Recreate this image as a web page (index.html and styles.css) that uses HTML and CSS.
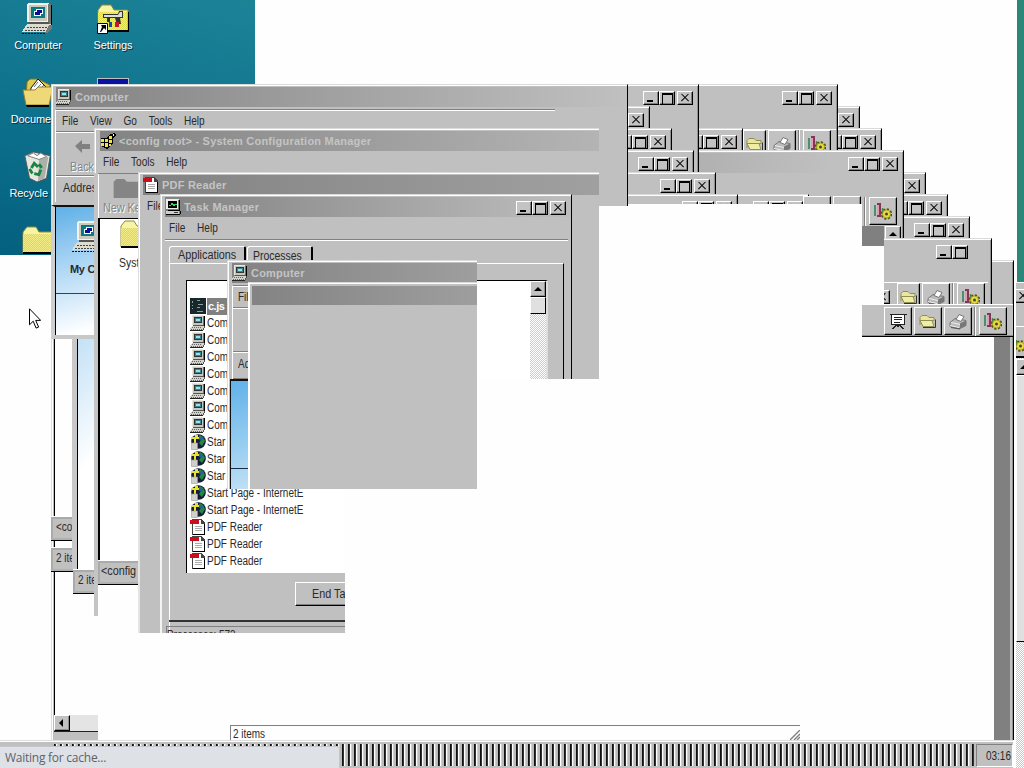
FILE: index.html
```html
<!DOCTYPE html>
<html lang="en">
<head>
<meta charset="utf-8">
<title>Desktop</title>
<link rel="stylesheet" href="styles.css">
</head>
<body>
<svg class="defs" aria-hidden="true">
  <symbol id="pc" viewBox="0 0 16 16" shape-rendering="crispEdges">
    <path fill="#e8e8de" d="M2 0h11v10H2z"/><path fill="#c6c8bd" d="M3 1h10v9H3z"/><path fill="#6d6d68" d="M13 1h1v9h-1z"/><path d="M14 1h1v10h-1z"/><path fill="#333" d="M4 2h8v6H4z"/><path fill="#2f8b9c" d="M5 3h6v4H5z"/><path fill="#9fe0e6" d="M6 4h4v2H6z"/>
    <path fill="#d2d2ca" d="M2 11h12v2l-1 2H0v-2h1z"/><path fill="#555" d="M3 10h11v1H3zM14 11h1v2h-1zM13 13h1v2h-1z"/><path fill="#222" d="M0 15h13v1H0z"/><path stroke="#666" stroke-dasharray="1 1" d="M2 12.5h10M1 14.5h11"/>
  </symbol>
  <symbol id="bigpc" viewBox="0 0 32 32" shape-rendering="crispEdges">
    <path fill="#f4f2e7" d="M6 0h20l2 2v17H5V2z"/><path fill="#cbc9bd" d="M7 2h18v16H7z"/><path fill="#74746c" d="M26 1h3v20h-3z"/><path d="M29 2h1v20h-1z"/><path fill="#555" d="M9 4h14v11H9z"/><path fill="#087b83" d="M10 5h13v10H10z"/><path fill="#fff" d="M14 6h7v5h-7zM12 8h7v5h-7z"/><path fill="#0e0b91" d="M15 7h5v3h-5zM13 9h5v3h-5z"/>
    <path fill="#555" d="M7 19h20v2H7z"/><path fill="#dedbd0" d="M5 21h24v3l-4 5H0l3-5z"/><path fill="#7a7972" d="M27 22h3v3l-4 5h-3z"/><path stroke="#444" stroke-dasharray="2 1" d="M5 24.5h20M3 27.5h20"/><path stroke="#111" stroke-dasharray="2 1" d="M0 30.5h24"/>
  </symbol>
  <pattern id="yellow" width="2" height="2" patternUnits="userSpaceOnUse"><path fill="#dddb49" d="M0 0h2v2H0z"/><path fill="#f3ec86" d="M0 0h1v1H0zM1 1h1v1H1z"/></pattern>
  <symbol id="folder" viewBox="0 0 32 30">
    <path fill="#f7f4a6" stroke="#8d8c34" d="M1 6l4-5h9l3 5h14v21H1z"/><path fill="url(#yellow)" d="M1 8h29v18H1z"/><path d="M1 26h30V8h1v20H1z"/>
  </symbol>
  <symbol id="settings" viewBox="0 0 32 30">
    <use href="#folder" width="32" height="30"/><path fill="#333" d="M6 10h15l1-3h4v7h-3l1 6h-4l-2-6h-5v4h-3v-4H6z"/><path fill="#ddd" d="M7 11h14l2-3h2v5H7z"/><path fill="#0b4bb6" d="M12 18h3v5h-3z"/><path fill="#c4162d" d="M18 18h4v5h-4z"/>
    <path fill="#fff" stroke="#000" d="M.5 19.5h10v10H.5z"/><path d="M4 21h5v5l-2-2-3 4H3l2-5z"/>
  </symbol>
  <symbol id="docs" viewBox="0 0 32 30">
    <path fill="#dfcd54" stroke="#80731f" d="M5 4l3-3h8l12 6v12H4z"/><path fill="#fff" stroke="#111" d="M9 10L16 1l10 10-3 7H8z"/><path stroke="#678" d="M12 9l4-5m-2 7l5-5m-2 6l5-5"/><path fill="#efd877" stroke="#967e2b" d="M1 12h12l3-3h15l-4 18H4z"/><path d="M4 27h23v2H5z"/>
  </symbol>
  <symbol id="bin" viewBox="0 0 32 34">
    <path fill="#e6e8df" stroke="#555" d="M2 5l9-4 18 4-4 24-10 4-8-4z"/><path fill="#abb0aa" d="M17 9l10-3-4 23-7 3z"/><path fill="#fff" stroke="#777" d="M5 5l6-3 4 3 4-3 6 4-8 3z"/><path fill="none" stroke="#188342" stroke-width="3" d="M9 18l3-5 4 4M19 20l-2 5-5-1M10 24l-3-5M17 14l3 4"/>
  </symbol>
  <symbol id="pdf" viewBox="0 0 16 16" shape-rendering="crispEdges">
    <path fill="#444" d="M2 0h9l4 4v12H2z"/><path fill="#fff" d="M3 1h8v4h3v10H3z"/><path fill="#c7101a" d="M0 1h9v4H0z"/><path stroke="#aaa" d="M5 7.5h7M5 9.5h7M5 11.5h7"/><path d="M14 5h1v11h-1zM3 15h11v1H3z"/>
  </symbol>
  <symbol id="cfg" viewBox="0 0 16 16" shape-rendering="crispEdges">
    <path d="M1 5h6l2-3 5-2 2 2-3 3v5l-4 5-2 1-6-3z"/><path fill="#efe54a" d="M1 6h3v3H1zM5 6h3v3H5zM1 10h3v3H1zM5 10h3v4H5zM9 7h3v3H9zM9 11h2v2H9zM9 3h3v3H9z"/><path fill="#fff" d="M13 1h1v2h-1z"/>
  </symbol>
  <symbol id="task" viewBox="0 0 16 16" shape-rendering="crispEdges">
    <path fill="#eee" d="M1 0h13v10H1z"/><path fill="#777" d="M13 1h1v10H2v-1h11z"/><path d="M14 1h1v11H3v-1h11zM3 2h9v7H3zM1 15h14v1H1zM15 12h1v3h-1z"/><path fill="#d0d0c8" d="M1 12h13v3H1z"/><path fill="#333" d="M9 13h4v1H9z"/><path stroke="#36dc4d" fill="none" d="M4 6h2l1-2 2 3 1-2h2"/>
  </symbol>
  <symbol id="globe" viewBox="0 0 16 16">
    <circle cx="8.500" cy="7.500" r="7.300" fill="#161b37"/><path fill="#1d8c3b" d="M10 1l3 2 2 4-3 5-3-3 2-3-3-2z"/><path fill="#245bac" d="M10 3l3 1-1 3-3-1z"/><path fill="#e7e331" d="M1 3h8v2H6v5H4V5H1zM5 1h3v2H5z"/><path fill="#d0d0ca" stroke="#999" stroke-width=".6" d="M1.500 9h6v6.500h-6z"/>
  </symbol>
  <symbol id="code" viewBox="0 0 14 14" shape-rendering="crispEdges">
    <path fill="#17282d" d="M0 0h14v14H0z"/><path stroke="#8d9da0" d="M2 3.500h1M2 6.500h1M2 9.500h1M6 2.500h3M7 5.500h4M6 8.500h3M6 11.500h5"/>
  </symbol>
  <symbol id="openf" viewBox="0 0 18 14">
    <path fill="#eae69e" stroke="#8e8e55" d="M1 10V3l2-2h5l2 2h5v3H5z"/><path fill="#f0eda4" stroke="#8e8e55" d="M1 6h12l2 6H4z"/><path stroke="#333" fill="none" d="M4 13h12.500V5"/>
  </symbol>
  <symbol id="print" viewBox="0 0 18 16">
    <path fill="#bbb" stroke="#777" d="M1 9l5-4 11 2v5l-6 3-10-2z"/><path fill="#fff" stroke="#777" d="M7 6l3-5 5 2-3 5z"/><path fill="#777" d="M11 10l6-3v5l-6 3z"/><path stroke="#eee" d="M2 9l9 2M1 12l9 2"/><path stroke="#555" d="M2 14l9 1.500"/>
  </symbol>
  <symbol id="gear" viewBox="0 0 18 17">
    <path fill="#4a906b" d="M0 2h2v11H0z"/><path fill="#80375c" d="M3 0h4v14H3z"/><path fill="#e29bb1" d="M3 2h2v10H3z"/><path stroke="#484" stroke-width="1.500" d="M8.500 5v9"/>
    <circle cx="12.500" cy="11" r="4.500" fill="#e6dc40" stroke="#55520c" stroke-width="2.500" stroke-dasharray="2 1.500"/><circle cx="12.500" cy="11" r="4" fill="#e6dc40" stroke="#8f8a28" stroke-width=".7"/><circle cx="12.500" cy="11" r="1.500" fill="#444"/>
  </symbol>
  <symbol id="board" viewBox="0 0 16 16" shape-rendering="crispEdges">
    <path fill="#fff" stroke="#222" d="M1.500 1.500h13v9h-13z"/><path stroke="#222" fill="none" d="M0 1.500h16M4 4.500h8M4 6.500h8M4 8.500h6M8 11v2M7 11l-4 4M9 11l4 4"/>
  </symbol>
</svg>

<main class="desktop">
  <section class="wallpaper">
    <div class="shortcuts">
      <figure><svg class="i32"><use href="#bigpc"/></svg><figcaption>Computer</figcaption></figure>
      <figure><svg class="i32"><use href="#settings"/></svg><figcaption>Settings</figcaption></figure>
      <figure><svg class="i32"><use href="#docs"/></svg><figcaption>Documents</figcaption></figure>
      <figure><div class="app-tile"></div></figure>
      <figure><svg class="i32"><use href="#bin"/></svg><figcaption>Recycle Bin</figcaption></figure>
      <figure></figure>
      <figure><svg class="i32"><use href="#folder"/></svg></figure>
    </div>
  </section>
  <div class="wallpaper-edge"></div>

  <div class="rail rail-a"></div>
  <div class="hscroll"><span class="sb left"></span></div>
  <div class="status st1"><span class="n">&lt;co</span></div>
  <div class="status st2"><span class="n">2 ite</span></div>
  <div class="sky sky-b"></div>
  <div class="status st3"><span class="n">2 ite</span></div>

  <!-- stacked frames on the right -->
  <div class="win g1"><div class="caps"><i class="cap min"></i><i class="cap max"></i><i class="cap close"></i></div></div>
  <div class="win a1"><div class="caps"><i class="cap min"></i><i class="cap max"></i><i class="cap close"></i></div></div>
  <div class="win a2"><div class="caps"><i class="cap close"></i></div></div>
  <div class="win a3"><div class="caps"><i class="cap min"></i><i class="cap max"></i><i class="cap close"></i></div></div>
  <div class="win g0"><div class="caps"><i class="cap min"></i><i class="cap max"></i><i class="cap close"></i></div></div>
  <div class="tools t1"><b><svg><use href="#openf"/></svg></b><b><svg><use href="#print"/></svg></b><hr><b><svg><use href="#gear"/></svg></b></div>
  <div class="win g2"><div class="caps"><i class="cap close"></i></div></div>
  <div class="win g3"><div class="caps"><i class="cap min"></i><i class="cap max"></i><i class="cap close"></i></div></div>
  <div class="win g4 shade"><div class="caps"><i class="cap min"></i><i class="cap max"></i><i class="cap close"></i></div></div>
  <div class="win a4"><div class="caps"><i class="cap min"></i><i class="cap max"></i><i class="cap close"></i></div></div>
  <div class="win a5"><div class="caps"><i class="cap min"></i><i class="cap max"></i><i class="cap close"></i></div></div>
  <div class="win a6b"><div class="caps"><i class="cap min"></i><i class="cap max"></i><i class="cap close"></i></div></div>
  <div class="win a6"><div class="caps"><i class="cap min"></i><i class="cap max"></i><i class="cap close"></i></div></div>
  <div class="tools t2"><b></b><b></b></div>
  <div class="well"></div>
  <div class="tools t3"><hr><b><svg><use href="#gear"/></svg></b></div>
  <span class="sb up lone"></span>
  <div class="win g5"><div class="caps"><i class="cap close"></i></div></div>
  <div class="win g6"><div class="caps"><i class="cap min"></i><i class="cap max"></i><i class="cap close"></i></div></div>
  <div class="win g7"><div class="caps"><i class="cap min"></i><i class="cap max"></i><i class="cap close"></i></div></div>
  <div class="win g9"></div>
  <div class="win g8"><div class="caps wide"><i class="cap min"></i><i class="cap max"></i></div></div>
  <div class="tools t4"><i class="cap close"></i><b><svg><use href="#openf"/></svg></b><b><svg><use href="#print"/></svg></b><hr><b><svg><use href="#gear"/></svg></b></div>
  <div class="tools t5"><b><svg><use href="#board"/></svg></b><b><svg><use href="#openf"/></svg></b><b><svg><use href="#print"/></svg></b><hr><b><svg><use href="#gear"/></svg></b></div>
  <div class="far">
    <div class="far-head"><i class="cap close"></i></div>
    <div class="far-tool"><svg class="i18"><use href="#gear"/></svg></div>
    <div class="far-scroll"><span class="sb up"></span><span class="thumb"></span></div>
  </div>

  <!-- Computer -->
  <section class="win computer">
    <header class="title"><svg class="i16"><use href="#pc"/></svg>Computer</header>
    <div class="inner">
      <nav class="menu"><div class="n"><span>File</span><span>View</span><span>Go</span><span>Tools</span><span>Help</span></div></nav>
      <div class="back"><svg viewBox="0 0 15 13"><path fill="#808080" d="M0 6l7-6v4h8v5H7v4z"/></svg><span class="n n92">Back</span></div>
      <div class="address"><span class="n n92">Addres</span></div>
    </div>
  </section>
  <div class="sky sky-a"><svg class="i32"><use href="#bigpc"/></svg><strong>My C</strong><hr></div>

  <!-- System Configuration Manager -->
  <section class="win config">
    <header class="title"><svg class="i16"><use href="#cfg"/></svg>&lt;config root&gt; - System Configuration Manager</header>
    <nav class="menu"><div class="n"><span>File</span><span>Tools</span><span>Help</span></div></nav>
  </section>
  <section class="config-body">
    <div class="newkey"><svg viewBox="0 0 26 20"><path fill="#858585" d="M0 3l3-3h8l3 3h12v17H0z"/></svg><span class="n n92">New Ke</span></div>
    <div class="tree"><svg class="i32"><use href="#folder"/></svg><span class="n n87">Syst</span></div>
    <div class="status"><span class="n n92">&lt;config</span></div>
  </section>

  <!-- PDF Reader -->
  <section class="win pdf">
    <header class="title"><svg class="i16"><use href="#pdf"/></svg>PDF Reader</header>
    <nav class="menu"><div class="n"><span>File</span></div></nav>
  </section>
  <div class="pdf-body"></div>

  <!-- Task Manager -->
  <section class="win taskman">
    <header class="title"><svg class="i16"><use href="#task"/></svg>Task Manager<div class="caps"><i class="cap min"></i><i class="cap max"></i><i class="cap close"></i></div></header>
    <nav class="menu"><div class="n"><span>File</span><span>Help</span></div></nav>
    <div class="tabs"><div><span class="n n92">Applications</span></div><div><span class="n n87">Processes</span></div></div>
    <div class="panel"><div class="list-top"><span class="sb up"></span><span class="thumb"></span></div></div>
  </section>
  <section class="task-body">
    <ul class="apps">
      <li class="sel"><svg class="i16"><use href="#code"/></svg><span>c.js -</span></li>
      <li><svg class="i16"><use href="#pc"/></svg><span class="n">Com</span></li>
      <li><svg class="i16"><use href="#pc"/></svg><span class="n">Com</span></li>
      <li><svg class="i16"><use href="#pc"/></svg><span class="n">Com</span></li>
      <li><svg class="i16"><use href="#pc"/></svg><span class="n">Com</span></li>
      <li><svg class="i16"><use href="#pc"/></svg><span class="n">Com</span></li>
      <li><svg class="i16"><use href="#pc"/></svg><span class="n">Com</span></li>
      <li><svg class="i16"><use href="#pc"/></svg><span class="n">Com</span></li>
      <li><svg class="i16"><use href="#globe"/></svg><span class="n">Star</span></li>
      <li><svg class="i16"><use href="#globe"/></svg><span class="n">Star</span></li>
      <li><svg class="i16"><use href="#globe"/></svg><span class="n">Star</span></li>
      <li><svg class="i16"><use href="#globe"/></svg><span class="n">Start Page - InternetE</span></li>
      <li><svg class="i16"><use href="#globe"/></svg><span class="n">Start Page - InternetE</span></li>
      <li><svg class="i16"><use href="#pdf"/></svg><span class="n">PDF Reader</span></li>
      <li><svg class="i16"><use href="#pdf"/></svg><span class="n">PDF Reader</span></li>
      <li><svg class="i16"><use href="#pdf"/></svg><span class="n">PDF Reader</span></li>
    </ul>
    <div class="buttons"><button><span class="n n92">End Ta</span></button></div>
    <div class="foot"><span class="n">Processes: 573</span></div>
  </section>

  <!-- second Computer window -->
  <section class="win computer2">
    <header class="title"><svg class="i16"><use href="#pc"/></svg>Computer</header>
    <div class="inner"><div class="row r1"><span class="n">Fil</span></div><div class="row r2"></div><div class="row r3"><span class="n">Ad</span></div></div>
    <div class="sky sky-c"></div>
  </section>
  <section class="win blank"><header class="title"></header></section>

  <div class="items"><span class="n">2 items</span><svg viewBox="0 0 10 10"><path stroke="#808080" stroke-width="1.400" d="M0 10L10 0M4 10l6-6M7 10l3-3"/></svg></div>

  <footer class="taskbar"><div class="tasks"></div><time><span class="n">03:16</span></time></footer>
  <div class="loading">Waiting for cache...</div>
  <svg class="cursor" viewBox="0 0 12 21"><path fill="#fff" stroke="#000" d="M.5.8v16l3.700-3.600 2.900 6.900 2.500-1-2.900-6.700h5z"/></svg>
</main>
</body>
</html>
```

FILE: styles.css
```css
* { box-sizing: border-box; }
body { margin: 0; overflow: hidden; background: #fff; }
.defs { position: absolute; width: 0; height: 0; }
.desktop {
  position: relative; width: 1024px; height: 768px; overflow: hidden; background: #fefefe;
  font: 12px/14px "Liberation Sans", sans-serif; color: #2a2a2a; white-space: nowrap;
}
.desktop > * { position: absolute; overflow: hidden; }
.n { display: inline-block; transform: scaleX(.83); transform-origin: 0 50%; }
.n92 { transform: scaleX(.9); }
.n87 { transform: scaleX(.87); }
.i16 { width: 16px; height: 16px; flex: none; }
.i18 { width: 18px; height: 17px; display: block; }
.i32 { width: 32px; height: 32px; display: block; }

.wallpaper { left: 0; top: 0; width: 255px; height: 255px; background: linear-gradient(15deg, #04607f, #0d718c 45%, #1c8397); }
.wallpaper-edge { left: 1017px; top: 0; width: 7px; height: 282px; background: #2b8778; }
.shortcuts { display: grid; grid-template-columns: 75px 75px; grid-auto-rows: 74px; padding-top: 2px; }
.shortcuts figure { margin: 0; display: flex; flex-direction: column; align-items: center; }
.shortcuts .i32 { margin-top: 1px; height: 32px; }
.shortcuts figcaption { color: #fff; font: 11px/14px "Liberation Sans", sans-serif; letter-spacing: -.1px; text-shadow: 1px 1px #00344a; margin-top: 3px; padding-left: 1px; }
.app-tile { width: 32px; height: 28px; margin-top: 2px; background: #0a12a0; border: 1px solid #c0c0c0; }

.win { background: #c0c0c0; border-top: 1px solid #dadada; border-right: 1px solid #000; box-shadow: inset 0 1px #fff, inset -1px 0 #909090; }
.caps { display: flex; justify-content: flex-end; padding: 6px 4px 0 0; }
.desktop > .win > .caps { padding-right: 5px; }
.desktop > .win > .caps.wide { padding-right: 23px; }
.cap { position: relative; flex: none; width: 16px; height: 14px; background: #c3c3c3; border: 1px solid; border-color: #fff #000 #000 #fff; box-shadow: inset -1px -1px #808080; }
.cap.close { margin-left: 2px; }
.min::after { content: ""; position: absolute; left: 3px; top: 8px; width: 6px; height: 2px; background: #000; }
.max::after { content: ""; position: absolute; left: 2px; top: 1px; width: 9px; height: 9px; border: 1px solid #000; border-top-width: 2px; }
.close::before, .close::after { content: ""; position: absolute; left: 2px; top: 5px; width: 10px; height: 1.3px; background: #000; transform: rotate(45deg); }
.close::after { transform: rotate(-45deg); }

.a1 { left: 628px; top: 84px; width: 71px; height: 120px; }
.a2 { left: 628px; top: 106px; width: 22px; height: 22px; }
.a3 { left: 628px; top: 128px; width: 44px; height: 22px; }
.a4 { left: 628px; top: 150px; width: 66px; height: 22px; }
.a5 { left: 628px; top: 172px; width: 88px; height: 22px; }
.a6 { left: 628px; top: 194px; width: 110px; height: 10px; }
.a6b { left: 738px; top: 194px; width: 71px; height: 10px; }
.g0 { left: 699px; top: 128px; width: 44px; height: 22px; }
.g1 { left: 699px; top: 84px; width: 139px; height: 120px; }
.g2 { left: 838px; top: 106px; width: 22px; height: 22px; }
.g3 { left: 838px; top: 128px; width: 44px; height: 22px; }
.g4 { left: 699px; top: 150px; width: 205px; height: 88px; }
.shade { background: linear-gradient(90deg, #b1b1b1, #c0c0c0 65%) 0 2px / 100% 20px no-repeat #c0c0c0; }
.g5 { left: 904px; top: 172px; width: 22px; height: 22px; }
.g6 { left: 904px; top: 194px; width: 44px; height: 22px; }
.g7 { left: 904px; top: 216px; width: 66px; height: 22px; }
.g8 { left: 884px; top: 238px; width: 108px; height: 68px; }
.g9 { left: 992px; top: 260px; width: 22px; height: 480px; background: linear-gradient(#c0c0c0, #c0c0c0) 0 0 / 100% 76px no-repeat, linear-gradient(90deg, transparent 2px, #808080 2px 18px, #c0c0c0 18px); }
.well { left: 598px; top: 204px; width: 286px; height: 130px; background: linear-gradient(#808080, #808080) 264px 22px / 22px 20px no-repeat, linear-gradient(#c0c0c0, #c0c0c0) 264px 0 / 22px 22px no-repeat #fefefe; }
.tools { display: flex; gap: 2px; }
.tools hr { flex: none; width: 2px; margin: 0 1px 0 0; border: 0; border-left: 1px solid #808080; border-right: 1px solid #fff; }
.tools b { flex: none; display: flex; align-items: center; justify-content: center; width: 28px; height: 28px; background: #c2c2c2; border: 1px solid; border-color: #fff #000 #000 #fff; box-shadow: inset -1px -1px #909090; }
.tools b svg { width: 18px; height: 17px; }
.t1 { left: 743px; top: 129px; width: 93px; height: 21px; border-top: 1px solid #fff; }
.t1 b:first-child { width: 23px; }
.t2 { left: 803px; top: 194px; width: 60px; height: 10px; padding-top: 2px; }
.t3 { left: 864px; top: 197px; width: 38px; height: 29px; }
.lone { left: 885px; top: 226px; }
.t4 { left: 884px; top: 282px; width: 104px; height: 24px; border-top: 1px solid #fff; }
.t4 .cap { margin: 7px 7px 0 -10px; }
.t4 b:nth-of-type(1) { width: 23px; }
.t4 .cap + b { margin-left: -2px; }
.t5 { left: 862px; top: 304px; width: 151px; height: 33px; padding: 2px 0 0 22px; background: #c0c0c0; border-top: 1px solid #fff; border-bottom: 1px solid #000; box-shadow: inset 0 -1px #909090; }
.t5 b { width: 28px; }
.sb { display: block; position: relative; width: 16px; height: 16px; background: #c2c2c2; border: 1px solid; border-color: #fff #000 #000 #fff; box-shadow: inset -1px -1px #909090; }
.desktop > .lone { position: absolute; height: 14px; }
.sb::after { content: ""; position: absolute; left: 3px; top: 5px; border: 4px solid transparent; border-top: 0; border-bottom-color: #000; }
.sb.left::after { left: 4px; top: 3px; border: 4px solid transparent; border-left: 0; border-right-color: #000; }
.thumb { display: block; background: #e0e0e0; border: 1px solid; border-color: #fff #000 #000 #fff; }
.far { left: 1014px; top: 282px; width: 10px; height: 486px; background: #c0c0c0; border-left: 2px solid #fff; }
.far-head { height: 45px; padding-top: 6px; border-top: 1px solid #fff; border-bottom: 1px solid #fff; }
.far-head .cap { display: block; margin-left: -1px; }
.far-tool { height: 31px; padding-top: 8px; border-bottom: 2px solid #000; }
.far-tool svg { margin-left: -8px; }
.far-scroll { height: 410px; padding-top: 1px; background: repeating-conic-gradient(#c8c8c8 0 25%, #fff 0 50%) 0 0 / 2px 2px; }
.far-scroll .thumb { width: 16px; height: 267px; }

.title { display: flex; align-items: center; gap: 3px; height: 19px; margin: 2px 0 0 4px; background: linear-gradient(90deg, #838383, #c0c0c0); color: #c4c4c4; font: bold 11px/19px "Liberation Sans", sans-serif; letter-spacing: .22px; }
.menu > .n { display: flex; gap: 14px; transform-origin: 0 0; transform: scaleX(.84); }
.computer { left: 51px; top: 84px; width: 577px; height: 122px; border-left: 1px solid #dadada; box-shadow: inset 1px 1px #fff; }
.computer .title { height: 20px; }
.inner { margin: 2px 0 0 3px; border-left: 1px solid #fff; border-top: 1px solid #808080; box-shadow: inset 0 1px #fff; }
.computer .inner { width: 500px; }
.computer .menu { padding: 4px 6px 3px; height: 22px; border-bottom: 1px solid #808080; }
.back { height: 44px; width: 60px; padding: 7px 0 0 14px; border-top: 1px solid #fff; border-bottom: 1px solid #808080; color: #858585; text-shadow: 1px 1px #fff; }
.back svg { display: block; width: 15px; height: 13px; margin-left: 5px; margin-bottom: 7px; }
.address { border-top: 1px solid #fff; padding: 4px 7px; height: 26px; }
.sky { background: linear-gradient(165deg, #5fb0e6, #a5d2f3 40%, #fff 95%); }
.sky-a { left: 51px; top: 205px; width: 44px; height: 134px; padding: 14px 0 0 17px; border-left: 4px solid #cfcfcf; border-top: 2px solid #111; border-bottom: 4px solid #c8c8c8; box-shadow: inset 1px 0 #000; }
.sky-a strong { display: block; margin: 9px 0 0 -2px; font: bold 11px/14px "Liberation Sans", sans-serif; letter-spacing: -.3px; }
.sky-a hr { margin: 17px 0 0 -16px; border: 0; border-top: 1px solid #26456a; }
.rail-a { left: 51px; top: 339px; width: 4px; height: 401px; background: linear-gradient(90deg, #ddd 1px, #fff 1px 2px, #bbb 2px 3px, #000 3px); }
.hscroll { left: 54px; top: 715px; width: 44px; height: 25px; background: linear-gradient(#e4e4e4 16px, #222 16px 17px, #c0c0c0 17px); }
.status { background: #c0c0c0; border-top: 1px solid #fff; border-bottom: 1px solid #000; box-shadow: inset 0 -2px #b0b0b0, inset 2px 2px #aaa; padding: 3px 0 0 5px; height: 24px; }
.st1 { left: 51px; top: 516px; width: 22px; height: 25px; }
.st2 { left: 51px; top: 547px; width: 22px; height: 25px; }
.sky-b { left: 72px; top: 339px; width: 24px; height: 230px; border-left: 5px solid #c8c8c8; box-shadow: inset 1px 0 #000; background: linear-gradient(135deg, #c3e1f6, #fff 55%); }
.st3 { left: 73px; top: 569px; width: 22px; height: 25px; }
.config { left: 94px; top: 128px; width: 505px; height: 47px; border-right: 0; border-left: 1px solid #ddd; box-shadow: inset 1px 1px #fff; }
.config .title { margin-left: 5px; height: 20px; background: linear-gradient(90deg, #838383, #b4b4b4); }
.config .menu { padding: 4px 0 0 8px; }
.config-body { left: 94px; top: 173px; width: 45px; height: 443px; border-left: 4px solid #c4c4c4; box-shadow: inset 1px 0 #fff; background: linear-gradient(#c0c0c0 45px, transparent 45px); }
.newkey { height: 46px; padding: 5px 0 0 5px; border-top: 1px solid #808080; color: #858585; text-shadow: 1px 1px #fff; border-bottom: 1px solid #000; }
.newkey svg { display: block; width: 26px; height: 19px; margin: 0 0 3px 10px; }
.tree { height: 341px; padding-left: 19px; border-left: 2px solid #000; background: #fff; }
.tree .i32 { margin: 0 0 5px 1px; }
.config-body .status { padding-left: 3px; height: 25px; }
.pdf { left: 138px; top: 172px; width: 461px; height: 207px; border-right: 0; border-left: 1px solid #ddd; box-shadow: inset 1px 1px #fff; }
.pdf .title { background: linear-gradient(90deg, #838383, #a0a0a0); height: 20px; }
.pdf .menu { padding: 4px 0 0 8px; }
.pdf-body { left: 138px; top: 379px; width: 24px; height: 254px; background: #c0c0c0; border-left: 2px solid #e4e4e4; }
.taskman { left: 160px; top: 194px; width: 412px; height: 185px; border-left: 1px solid #ddd; box-shadow: inset 1px 1px #fff; }
.taskman .title { background: linear-gradient(90deg, #838383, #bdbdbd); height: 20px; }
.taskman .title .caps { margin-left: auto; padding: 2px 5px 0 0; }
.taskman .menu { height: 22px; margin: 1px 3px 0 4px; padding: 3px 0 0 4px; border-bottom: 1px solid #808080; box-shadow: 0 1px #fff; }
.tabs { display: flex; gap: 1px; margin: 6px 0 0 8px; height: 17px; }
.tabs div { border: 1px solid; border-color: #fff #000 transparent #fff; border-right-width: 2px; border-radius: 3px 2px 0 0; padding: 1px 0 0 8px; width: 77px; }
.tabs div + div { padding: 2px 0 0 5px; width: 66px; }
.panel { margin-left: 8px; width: 395px; height: 150px; border: 1px solid; border-color: #fff #000 #000 #fff; }
.list-top { display: flex; flex-direction: column; align-items: flex-end; width: 362px; height: 110px; margin: 16px 0 0 16px; border: 1px solid #000; border-right: 2px solid #ddd; background: linear-gradient(#fff, #fff) 0 0 / 343px 100% no-repeat, repeating-conic-gradient(#ccc 0 25%, #fff 0 50%) 0 0 / 2px 2px; }
.list-top .thumb { width: 16px; height: 17px; }
.task-body { left: 160px; top: 280px; width: 185px; height: 353px; border-left: 2px solid #f4f4f4; background: linear-gradient(90deg, #c0c0c0 7px, #fff 7px 8px, #c0c0c0 8px); }
.apps { height: 293px; margin: 0 0 0 24px; padding: 17px 0 0 3px; list-style: none; background: #fff; border-left: 1px solid #000; border-top: 1px solid #000; overflow: hidden; }
.apps li { display: flex; gap: 1px; height: 17px; line-height: 16px; }
.apps .n { height: 17px; }
.sel span { background: #808080; color: #fff; font: bold 11px/16px "Liberation Sans", sans-serif; padding-left: 1px; width: 24px; overflow: hidden; letter-spacing: -.5px; }
.buttons { height: 49px; padding: 9px 0 0 126px; border-bottom: 2px solid #333; margin-left: 7px; }
button { display: block; width: 75px; height: 24px; padding: 0 0 0 16px; background: #c0c0c0; border: 1px solid; border-color: #fff #000 #000 #fff; box-shadow: inset -1px -1px #808080; font: 12px/20px "Liberation Sans", sans-serif; border-radius: 0; text-align: left; color: #2a2a2a; }
.foot { height: 12px; margin: 4px 0 0 4px; border-top: 1px solid #808080; border-left: 1px solid #808080; overflow: hidden; padding-top: 1px; }
.computer2 { left: 227px; top: 260px; width: 250px; height: 229px; border-right: 0; border-left: 1px solid #ddd; box-shadow: inset 1px 1px #fff; }
.computer2 .title { height: 20px; }
.computer2 .title, .blank .title { background: linear-gradient(90deg, #838383, #9e9e9e); }
.computer2 .inner { margin: 2px 0 0 4px; }
.row { padding: 4px 5px; height: 22px; border-bottom: 1px solid #808080; }
.r2 { height: 44px; border-top: 1px solid #fff; }
.r3 { height: 27px; border-top: 1px solid #fff; }
.sky-c { margin-left: 2px; height: 112px; border: 2px solid #111; border-width: 2px 0 0 1px; background: linear-gradient(#1a2b48, #1a2b48) 0 87px / 100% 1px no-repeat, linear-gradient(165deg, #61b2e9, #b8ddf5 60%, #fff); }
.blank { left: 248px; top: 282px; width: 229px; height: 207px; border-right: 0; border-left: 1px solid #fff; box-shadow: inset 1px 1px #fff; }
.blank .title { margin: 3px 0 0 3px; }
.items { left: 230px; top: 725px; width: 570px; height: 15px; padding: 1px 2px; border-top: 1px solid #808080; border-left: 1px solid #808080; }
.items svg { float: right; width: 10px; height: 10px; margin: 3px -2px 0 0; }
.taskbar { left: 0; top: 740px; width: 1013px; height: 28px; display: flex; padding-top: 3px; background: #c0c0c0; border-top: 1px solid #ddd; box-shadow: inset 0 1px #fff; }
.tasks { flex: none; width: 922px; height: 22px; margin-left: 52px; background: repeating-linear-gradient(90deg, #bbb 0 2px, #111 2px 3px, #333 3px 4px, #fff 4px 5px, #d0d0d0 5px 6px); }
.taskbar time { flex: none; width: 37px; height: 23px; margin-left: 2px; padding: 4px 0 0 9px; border: 1px solid; border-color: #808080 #fff #fff #808080; }
.loading { left: -1px; top: 746px; width: 341px; height: 23px; padding: 3px 5px; background: #dee1e6; border: 1px solid #c4c6ca; border-radius: 0 3px 0 0; color: #5f6368; font: 12px/16px "Open Sans", "Noto Sans", sans-serif; letter-spacing: -.25px; }
.cursor { left: 29px; top: 308px; width: 12px; height: 21px; }
```
